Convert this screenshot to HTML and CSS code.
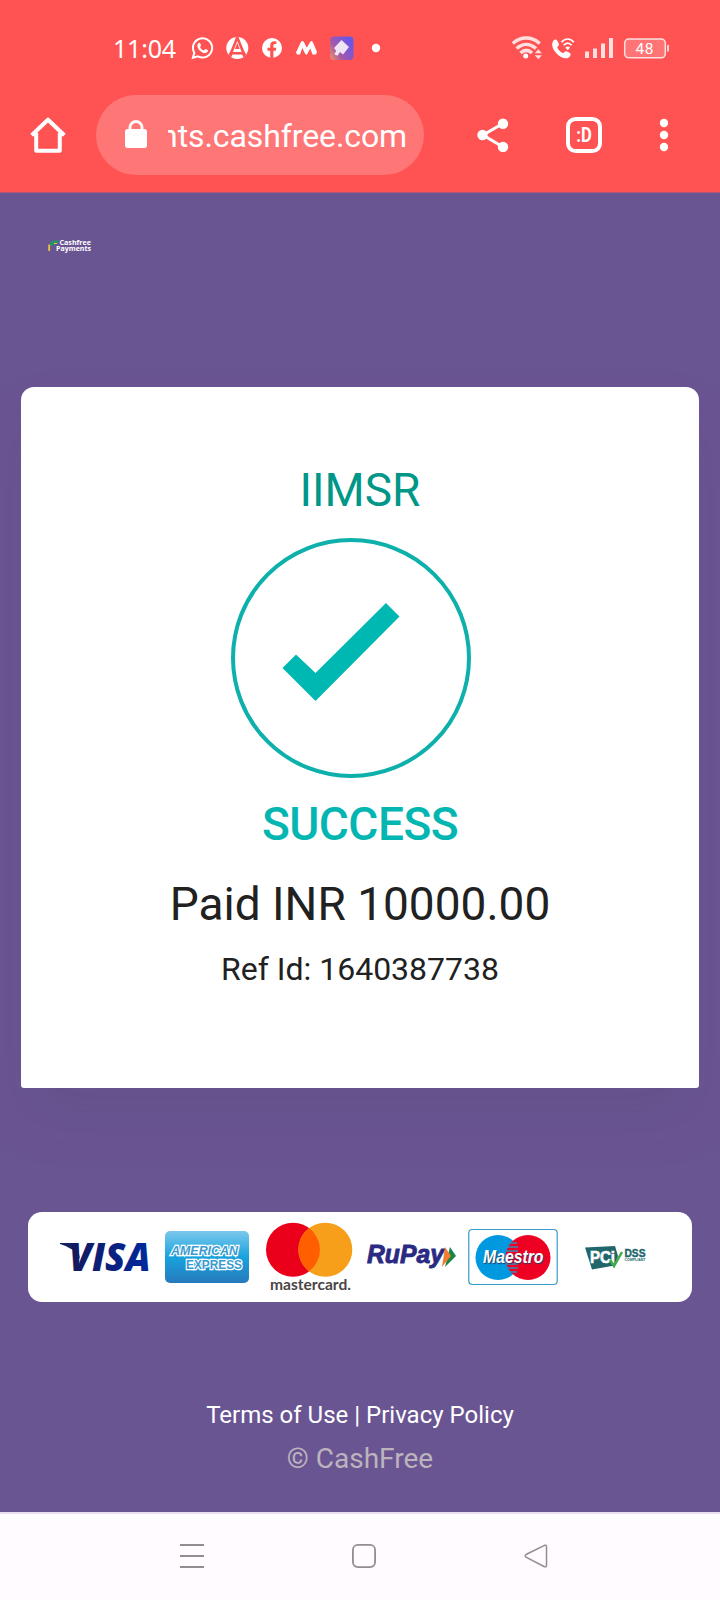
FILE: index.html
```html
<!DOCTYPE html>
<html lang="en">
<head>
<meta charset="utf-8">
<title>Cashfree Payments</title>
<link rel="stylesheet" href="styles.css">
</head>
<body>
<div class="screen">
  <header class="chrome">
    <div class="status">
      <span class="clock">11:04</span>
      <svg class="status-left" viewBox="190 32 194 32" width="194" height="32">
        <path d="M194.300 52.800a9.600 9.600 0 1 1 3.600 3.500l-5 1.500z" fill="none" stroke="#fff" stroke-width="2"/>
        <path d="M198.300 43.200c.6-.7 1.600-.7 1.900.1l.8 1.900c.1.500-.8 1.400-1 1.700.8 1.700 2.200 2.900 3.900 3.600.5-.5 1.200-1.600 1.700-1.400l2 1c.6.300.4 1.400-.1 2-2.200 2.200-5.200.8-7.200-1-2.100-2-4.200-5.700-2-7.900z" fill="#fff"/>
        <circle cx="237.300" cy="48" r="11" fill="#fff"/>
        <path d="M237.300 37.500l-6.300 15.800h12.600z" fill="none" stroke="#ff5353" stroke-width="2.600"/>
        <path d="M237.300 43l2.400 6h-4.800z" fill="#ff5353"/>
        <path d="M228.500 54.500l2-3.500 2 3.500-1.500 3zM246.100 54.500l-2-3.500-2 3.500 1.500 3z" fill="#ff5353"/>
        <circle cx="272" cy="48" r="10" fill="#fff"/>
        <path d="M270.200 58v-7.300h-2.700v-3h2.700v-2.300c0-2.800 1.700-4.200 4-4.200l2.200.2v2.500h-1.300c-1.300 0-1.700.8-1.700 1.700v2.100h2.900l-.5 3h-2.400V58z" fill="#ff5353"/>
        <path d="M296 52.500l4.800-10.200q1.600-2.800 3.200 0l2.800 5.400 3.200-5.400q1.600-2.600 3 .2l4 9.500-1.200 2.500h-3.300l-2.200-6-3 5.500q-1 1.500-2 0l-3-6-2.300 6.500h-3z" fill="#fff"/>
        <defs><linearGradient id="app" x1="0" y1="1" x2="1" y2=".35"><stop offset="0" stop-color="#f39362"/><stop offset=".4" stop-color="#a558a8"/><stop offset="1" stop-color="#6557ea"/></linearGradient></defs>
        <rect x="330" y="36.500" width="23.500" height="23.500" rx="4" fill="url(#app)"/>
        <path d="M341.500 40l7.500 7-6 7.500-3-2.500-2.500 3.800-3.300-1.600 2-3.300-2.200-3z" fill="#f0e5f5"/>
        <circle cx="376" cy="48" r="4.200" fill="#fff"/>
      </svg>
      <svg class="status-right" viewBox="510 32 162 32" width="162" height="32">
        <g fill="none" stroke="#ffe0e0" stroke-width="3.500">
          <path d="M512.800 43.500c8-7.200 18.900-7.200 26.900 0M516.600 48.500c6-5.500 13.400-5.500 19.400 0M520.500 53c3.600-3.200 7.900-3.200 11.500 0"/>
        </g>
        <circle cx="525.700" cy="56" r="2.500" fill="#fff"/>
        <path d="M534.800 53.300l3.500-4 3.500 4zM534.800 55.300l3.500 4 3.500-4z" fill="#ffe0e0"/>
        <path d="M552.900 41.500c1.500-2.500 3.300-2.500 4.300-1l1.700 3.500c.4 1.500-1.400 2.700-1.700 3.500 1 2.500 3.200 4.600 5.700 5.600 1 0 2-2.200 3.600-1.800l3 1.500c1.800 1 1.300 3-.4 4.400-3.500 2.700-8.500.3-12-3.200-3.700-3.600-6.300-9-4.200-12.500z" fill="#fff"/>
        <g fill="none" stroke="#fff" stroke-width="1.700"><path d="M561.500 42.200c3.400-4.300 8.900-4.300 12.300 0M563.700 45.300c2.500-3 5.400-3 7.900 0"/></g><path d="M565.300 47.600q2.400-2 4.800 0l-2.400 2.700z" fill="#fff"/>
        <path d="M585 51.500h4V58h-4zM593 48.500h4V58h-4zM601 43.500h4V58h-4zM609 38h4v20h-4z" fill="#ffe0e0"/>
        <rect x="624.700" y="39" width="40.600" height="18.800" rx="4" fill="#ff7474" stroke="#ffe0e0" stroke-width="1.500"/>
        <path d="M668 45v6.500" stroke="#ffe0e0" stroke-width="1.800"/>
        <text x="635.500" y="53.700" font-family="Roboto, sans-serif" font-size="15.500" fill="#fff" textLength="18">48</text>
      </svg>
    </div>
    <div class="toolbar">
      <svg class="home" viewBox="0 0 36 36" width="36" height="36"><path d="M1.700 18.300L18 2.700l16.300 15.600M6.200 16v17.700h23.600V16" fill="none" stroke="#fff" stroke-width="4" stroke-linejoin="round"/></svg>
      <div class="address">
        <svg viewBox="0 0 22 28" width="22" height="28"><path d="M5 11V7.500a6 6 0 0 1 12 0V11" fill="none" stroke="#fff" stroke-width="2.800"/><rect y="9" width="22" height="19" rx="2.800" fill="#fff"/></svg>
        <div class="url"><span>nts.cashfree.com</span></div>
      </div>
      <svg class="share" viewBox="0 0 32 34" width="32" height="34"><path d="M26 5.500L6 17l20 12" fill="none" stroke="#fff" stroke-width="3"/><g fill="#fff"><circle cx="26" cy="5.700" r="5.200"/><circle cx="5.500" cy="17" r="5.200"/><circle cx="26" cy="29" r="5.200"/></g></svg>
      <svg class="tabs" viewBox="0 0 36 36" width="36" height="36"><rect x="2" y="2" width="32" height="32" rx="7.500" fill="none" stroke="#fff" stroke-width="4"/><text x="10.300" y="24.800" textLength="15.500" lengthAdjust="spacingAndGlyphs">:D</text></svg>
      <svg class="more" viewBox="0 0 10 34" width="10" height="34"><g fill="#fff"><circle cx="5" cy="5" r="4.200"/><circle cx="5" cy="17" r="4.200"/><circle cx="5" cy="29" r="4.200"/></g></svg>
    </div>
  </header>

  <main class="page">
    <svg class="brand" viewBox="0 0 46 16" width="46" height="16">
      <path d="M1.200 12V5.500" stroke="#f4c13d" stroke-width="1.800"/>
      <path d="M2 4.500q1-3 4-3h5l-1.500 3.500H6L4.500 7H2z" fill="#27936a"/>
      <path d="M6 4.500h3" stroke="#f4c13d" stroke-width="1"/>
      <text x="11.500" y="6.400" textLength="31.500" lengthAdjust="spacingAndGlyphs">Cashfree</text>
      <text x="8" y="12.200" textLength="35" lengthAdjust="spacingAndGlyphs">Payments</text>
    </svg>

    <section class="card">
      <h1 class="merchant">IIMSR</h1>
      <div class="badge">
        <svg viewBox="0 0 240 240" width="240" height="240"><circle cx="120" cy="120" r="118" fill="none" stroke="#0eb0ab" stroke-width="4"/><path d="M51.500 130L65 116.500l19.500 18.500L155 65l13.500 13.500L84.500 163z" fill="#00b8b2"/></svg>
      </div>
      <p class="result">SUCCESS</p>
      <p class="amount">Paid INR 10000.00</p>
      <p class="ref">Ref Id: 1640387738</p>
    </section>

    <section class="networks">
      <svg class="visa" viewBox="0 0 90 90" width="90" height="90">
        <defs><linearGradient id="vg"><stop offset="0" stop-color="#14185c"/><stop offset="1" stop-color="#00299f"/></linearGradient></defs>
        <path d="M0 31h13.500q3.500 0 4.200 3.500L20 47q-5-11-20-15z" fill="#15205f"/>
        <text x="9" y="58.600" textLength="81.500" lengthAdjust="spacingAndGlyphs" fill="url(#vg)">VISA</text>
      </svg>
      <svg class="amex" viewBox="0 0 86 90" width="86" height="90">
        <defs><linearGradient id="ag" x1="0" y1="0" x2="0" y2="1"><stop offset="0" stop-color="#7cc8ed"/><stop offset=".5" stop-color="#18a3dc"/><stop offset="1" stop-color="#2779bd"/></linearGradient></defs>
        <rect x="1" y="19" width="84" height="52" rx="5" fill="url(#ag)"/>
        <text x="7" y="42.700" textLength="67" lengthAdjust="spacingAndGlyphs">AMERICAN</text>
        <text x="22" y="57" textLength="56" lengthAdjust="spacingAndGlyphs">EXPRESS</text>
      </svg>
      <svg class="mastercard" viewBox="0 0 90 90" width="90" height="90">
        <circle cx="29" cy="37.700" r="27" fill="#eb001b"/><circle cx="61.300" cy="37.700" r="27" fill="#f79e1b"/>
        <path d="M45.150 16.100a27 27 0 0 1 0 43.200a27 27 0 0 1 0-43.200z" fill="#ff5f00"/>
        <text x="6" y="78" textLength="81" lengthAdjust="spacingAndGlyphs">mastercard.</text>
      </svg>
      <svg class="rupay" viewBox="0 0 92 90" width="92" height="90">
        <text x="1" y="50.800" textLength="77" lengthAdjust="spacingAndGlyphs">RuPay</text>
        <path d="M84 35l6 9-11 11z" fill="#188647"/><path d="M79 35l6 9-9 11z" fill="#f47b32"/>
      </svg>
      <svg class="maestro" viewBox="0 0 90 90" width="90" height="90">
        <rect x=".8" y="17.500" width="88.400" height="55" rx="3.500" fill="#fff" stroke="#399bc7" stroke-width="1.200"/>
        <circle cx="30" cy="45.500" r="22.500" fill="#0099df"/><circle cx="60" cy="45.500" r="22.500" fill="#ed0022"/>
        <path d="M41 31h8M39 35h11M38 39h12M38 52h12M39 56h11M41 60h8" stroke="#3988bb" stroke-width="1.700"/>
        <text x="15" y="51.300" textLength="60.500" lengthAdjust="spacingAndGlyphs">Maestro</text>
      </svg>
      <svg class="pci" viewBox="0 0 66 90" width="66" height="90">
        <path d="M3 35.500l30-1.500 3 10-3.500 9.500-22.500 4z" fill="#20666a"/>
        <text class="pci-name" x="8" y="51" textLength="25" lengthAdjust="spacingAndGlyphs">PCi</text>
        <path d="M28 48l4 6 8-14" fill="none" stroke="#3cae49" stroke-width="2.500"/>
        <text class="pci-dss" x="42.500" y="45" textLength="21" lengthAdjust="spacingAndGlyphs">DSS</text>
        <text class="pci-note" x="42.500" y="49.300" textLength="21" lengthAdjust="spacingAndGlyphs">COMPLIANT</text>
      </svg>
    </section>

    <footer class="foot">
      <p class="links"><a>Terms of Use</a> | <a>Privacy Policy</a></p>
      <p class="copy">© CashFree</p>
    </footer>
  </main>

  <nav class="system-nav">
    <svg viewBox="0 0 24 24" width="24" height="24"><path d="M0 1h24M0 12h24M0 23h24" stroke="#938d93" stroke-width="1.800"/></svg>
    <svg viewBox="0 0 24 24" width="24" height="24"><rect x=".9" y=".9" width="22.200" height="22.200" rx="5" fill="none" stroke="#938d93" stroke-width="1.800"/></svg>
    <svg viewBox="0 0 24 24" width="24" height="24"><path d="M20.500 1.300L2 10.500q-1.800 1.300 0 2.700l18.500 9.500q2 .7 2-1.500V2.800q0-2.200-2-1.500z" fill="none" stroke="#938d93" stroke-width="1.500"/></svg>
  </nav>
</div>
</body>
</html>
```

FILE: styles.css
```css
* { box-sizing: border-box; }
body { margin: 0; font-family: Roboto, "Liberation Sans", sans-serif; }
h1, p { margin: 0; font-weight: 400; }
svg { display: block; flex: none; }

.screen { width: 720px; height: 1600px; display: flex; flex-direction: column; background: #6a5593; overflow: hidden; }

.chrome { height: 193px; flex: none; background: #ff5353; border-bottom: 1px solid #b55578; }
.status { height: 95px; padding: 32px 48px 0 112px; display: flex; align-items: flex-start; }
.clock { width: 78px; padding-left: 1px; font: 25px/32px "Noto Sans", sans-serif; color: #fff; letter-spacing: -0.2px; white-space: nowrap; }
.status-right { margin-left: auto; }

.toolbar { height: 80px; display: flex; align-items: center; padding-left: 30px; }
.address { width: 328px; height: 80px; margin-left: 30px; padding: 0 17px 0 29px; display: flex; align-items: center; background: #ff7676; border-radius: 40px; }
.address svg { margin-bottom: 2px; }
.url { flex: 1; margin-left: 21px; padding-top: 2px; display: flex; justify-content: flex-end; overflow: hidden; color: #fff; font-size: 32px; line-height: 44px; white-space: nowrap; letter-spacing: -0.1px; }
.share { margin-left: 53px; }
.tabs { margin-left: 57px; font: 700 20px Roboto, sans-serif; fill: #fff; }
.more { margin-left: 57px; }

.page { flex: 1; display: flex; flex-direction: column; }
.brand { margin: 46px 0 0 48px; font-family: "Open Sans", sans-serif; font-size: 6.600px; font-weight: 700; fill: #fff; }

.card { width: 678px; height: 701px; margin: 132px 0 0 21px; padding-top: 75px; background: #fff; border-radius: 13px 13px 3px 3px; box-shadow: 0 30px 60px rgba(60, 50, 70, 0.09); text-align: center; color: #212121; }
.merchant { font-size: 46px; line-height: 56px; color: #009688; }
.badge { margin-top: 20px; padding-right: 18px; display: flex; justify-content: center; }
.result { margin-top: 18px; font-size: 46px; line-height: 56px; font-weight: 500; letter-spacing: -0.5px; color: #04b6b1; }
.amount { margin-top: 24px; font-size: 46px; line-height: 56px; }
.ref { margin-top: 17px; font-size: 32px; line-height: 40px; }

.networks { width: 664px; height: 90px; margin: 124px 0 0 28px; padding-left: 32px; display: flex; background: #fff; border-radius: 14px; }
.visa { overflow: visible; font: italic 800 38px "Open Sans", sans-serif; }
.amex { margin-left: 14px; font: 700 13.500px "Liberation Sans", sans-serif; fill: #3a9bd0; stroke: #fff; stroke-width: 0; }
.amex text { stroke-width: 2.600px; paint-order: stroke; }
.amex text:first-of-type { font-style: italic; }
.mastercard { margin-left: 14px; font: 700 16px Lato, sans-serif; fill: #4b4547; }
.rupay { margin-left: 12px; font: italic 700 26px "Liberation Sans", sans-serif; fill: #2a2a83; stroke: #2a2a83; stroke-width: 0; }
.rupay text { stroke-width: 0.900px; }
.maestro { margin-left: 10px; font: italic 700 17.500px "Liberation Sans", sans-serif; fill: #fff; }
.maestro text { text-shadow: 1px 1px 1px #273a66; }
.pci { margin-left: 24px; font-family: "Liberation Sans", sans-serif; font-weight: 700; }
.pci-name { font-size: 16px; fill: #fff; stroke: #fff; stroke-width: 0.600px; }
.pci-dss { font-size: 10.500px; fill: #20666a; stroke: #20666a; stroke-width: 0.400px; }
.pci-note { font-size: 4px; fill: #20666a; }

.foot { margin-top: 98px; text-align: center; }
.links { font-size: 24px; line-height: 30px; color: #fff; }
.copy { margin-top: 11px; font-size: 28px; line-height: 36px; color: #bdb3bd; }

.system-nav { height: 88px; flex: none; padding: 30px 0 0 180px; display: flex; gap: 148px; background: #fffbff; border-top: 2px solid #e9def2; }
```
